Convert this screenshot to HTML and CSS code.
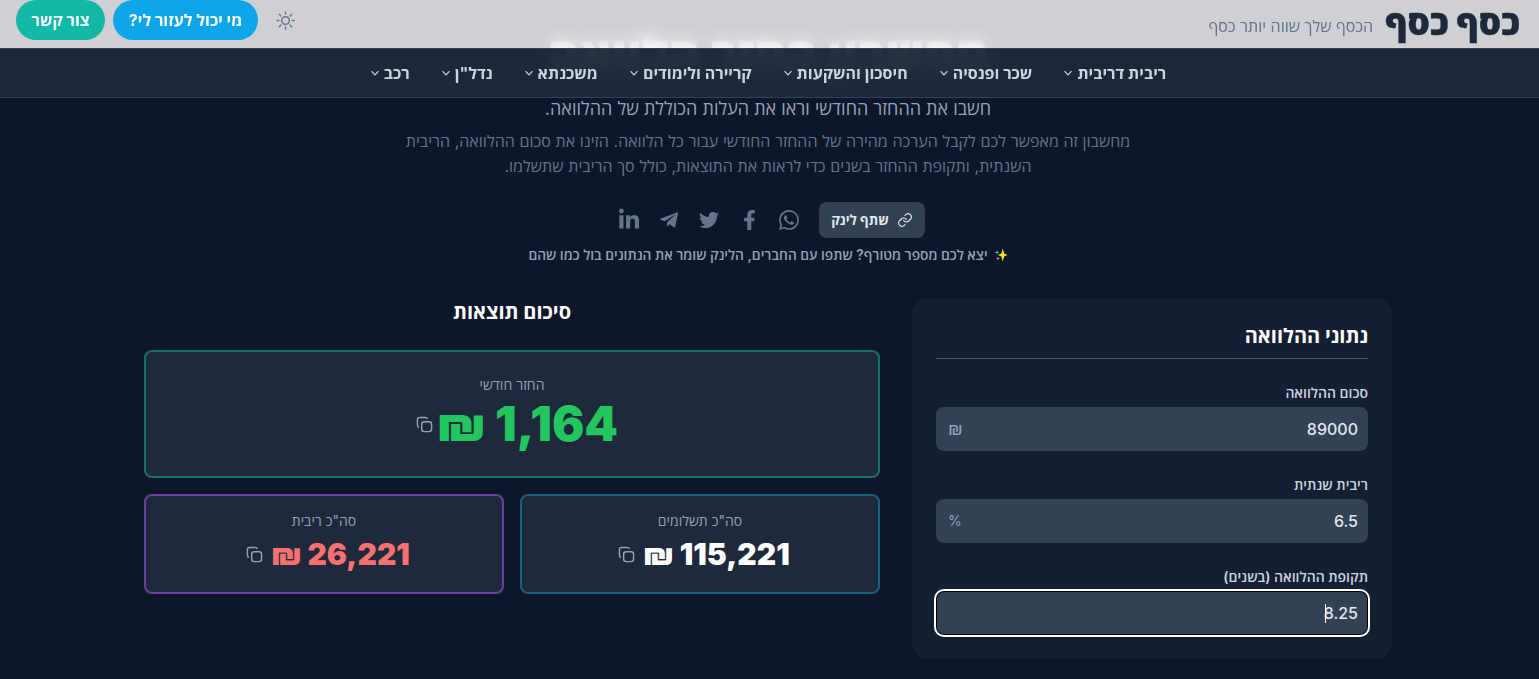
FILE: index.html
```html
<!DOCTYPE html>
<html lang="he" dir="rtl">
<head>
    <meta charset="UTF-8">
    <meta name="viewport" content="width=device-width, initial-scale=1.0">
    <title>כסף כסף - מחשבון החזר הלוואה</title>
    <link rel="stylesheet" href="styles.css">
</head>
<body>
    <header class="site-header">
        <div class="top-bar">
            <div class="brand">
                <span class="logo">כסף כסף</span>
                <span class="tagline">הכסף שלך שווה יותר כסף</span>
            </div>
            <div class="top-actions">
                <button class="theme-btn" aria-label="מצב תצוגה">
                    <svg viewBox="0 0 24 24" width="23" height="23" fill="none" stroke="currentColor" stroke-width="1.5" stroke-linecap="round">
                        <circle cx="12" cy="12" r="4"/>
                        <path d="M12 3v2.2M12 18.8V21M3 12h2.2M18.8 12H21M5.6 5.6l1.6 1.6M16.8 16.8l1.6 1.6M5.6 18.4l1.6-1.6M16.8 7.2l1.6-1.6"/>
                    </svg>
                </button>
                <a class="pill pill-blue" href="#">מי יכול לעזור לי?</a>
                <a class="pill pill-teal" href="#">צור קשר</a>
            </div>
        </div>
        <nav class="main-nav">
            <a href="#"><span>ריבית דריבית</span><svg class="chev" viewBox="0 0 10 10"><path d="M1.5 3.2 5 6.8l3.5-3.6"/></svg></a>
            <a href="#"><span>שכר ופנסיה</span><svg class="chev" viewBox="0 0 10 10"><path d="M1.5 3.2 5 6.8l3.5-3.6"/></svg></a>
            <a href="#"><span>חיסכון והשקעות</span><svg class="chev" viewBox="0 0 10 10"><path d="M1.5 3.2 5 6.8l3.5-3.6"/></svg></a>
            <a href="#"><span>קריירה ולימודים</span><svg class="chev" viewBox="0 0 10 10"><path d="M1.5 3.2 5 6.8l3.5-3.6"/></svg></a>
            <a href="#"><span>משכנתא</span><svg class="chev" viewBox="0 0 10 10"><path d="M1.5 3.2 5 6.8l3.5-3.6"/></svg></a>
            <a href="#"><span>נדל"ן</span><svg class="chev" viewBox="0 0 10 10"><path d="M1.5 3.2 5 6.8l3.5-3.6"/></svg></a>
            <a href="#"><span>רכב</span><svg class="chev" viewBox="0 0 10 10"><path d="M1.5 3.2 5 6.8l3.5-3.6"/></svg></a>
        </nav>
    </header>

    <main class="container">
        <section class="intro">
            <h1>מחשבון החזר הלוואה</h1>
            <p class="subtitle">חשבו את ההחזר החודשי וראו את העלות הכוללת של ההלוואה.</p>
            <p class="description">מחשבון זה מאפשר לכם לקבל הערכה מהירה של ההחזר החודשי עבור כל הלוואה. הזינו את סכום ההלוואה, הריבית השנתית, ותקופת ההחזר בשנים כדי לראות את התוצאות, כולל סך הריבית שתשלמו.</p>

            <div class="share-row">
                <button class="share-btn">
                    <svg viewBox="0 0 24 24" width="16" height="16" fill="none" stroke="currentColor" stroke-width="1.7" stroke-linecap="round" stroke-linejoin="round">
                        <path d="M10 13a5 5 0 0 0 7.5.5l3-3a5 5 0 0 0-7-7l-1.7 1.7"/>
                        <path d="M14 11a5 5 0 0 0-7.5-.5l-3 3a5 5 0 0 0 7 7l1.7-1.7"/>
                    </svg>
                    שתף לינק
                </button>
                <a class="social" href="#" aria-label="WhatsApp"><svg viewBox="0 0 448 512" width="20" height="24"><path d="M380.9 97.1C339 55.1 283.2 32 223.9 32c-122.4 0-222 99.6-222 222 0 39.1 10.2 77.3 29.6 111L0 480l117.7-30.9c32.4 17.7 68.9 27 106.1 27h.1c122.3 0 224.1-99.6 224.1-222 0-59.3-25.2-115-67.1-157zm-157 341.6c-33.2 0-65.7-8.9-94-25.7l-6.7-4-69.8 18.3L72 359.2l-4.4-7c-18.5-29.4-28.2-63.3-28.2-98.2 0-101.7 82.8-184.5 184.6-184.5 49.3 0 95.6 19.2 130.4 54.1 34.8 34.9 56.2 81.2 56.1 130.5 0 101.8-84.9 184.6-186.6 184.6zm101.2-138.2c-5.5-2.8-32.8-16.2-37.9-18-5.1-1.9-8.8-2.8-12.5 2.8-3.7 5.6-14.3 18-17.6 21.8-3.2 3.7-6.5 4.2-12 1.4-32.6-16.3-54-29.1-75.5-66-5.7-9.8 5.7-9.1 16.3-30.3 1.8-3.7.9-6.9-.5-9.7-1.4-2.8-12.5-30.1-17.1-41.2-4.5-10.8-9.1-9.3-12.5-9.5-3.2-.2-6.9-.2-10.6-.2-3.7 0-9.7 1.4-14.8 6.9-5.1 5.6-19.4 19-19.4 46.3 0 27.3 19.9 53.7 22.6 57.4 2.8 3.7 39.1 59.7 94.8 83.8 35.2 15.2 49 16.5 66.6 13.9 10.7-1.6 32.8-13.4 37.4-26.4 4.6-13 4.6-24.1 3.2-26.4-1.3-2.5-5-3.9-10.5-6.6z"/></svg></a>
                <a class="social" href="#" aria-label="Facebook"><svg viewBox="0 0 320 512" width="13" height="20"><path d="M279.14 288l14.22-92.66h-88.91v-60.13c0-25.35 12.42-50.06 52.24-50.06h40.42V6.26S260.43 0 225.36 0c-73.22 0-121.08 44.38-121.08 124.72v70.62H22.89V288h81.39v224h100.17V288z"/></svg></a>
                <a class="social" href="#" aria-label="Twitter"><svg viewBox="0 0 512 512" width="20" height="24"><path d="M459.37 151.716c.325 4.548.325 9.097.325 13.645 0 138.72-105.583 298.558-298.558 298.558-59.452 0-114.68-17.219-161.137-47.106 8.447.974 16.568 1.299 25.34 1.299 49.055 0 94.213-16.568 130.274-44.832-46.132-.975-84.792-31.188-98.112-72.772 6.498.974 12.995 1.624 19.818 1.624 9.421 0 18.843-1.3 27.614-3.573-48.081-9.747-84.143-51.98-84.143-102.985v-1.299c13.969 7.797 30.214 12.67 47.431 13.319-28.264-18.843-46.781-51.005-46.781-87.391 0-19.492 5.197-37.36 14.294-52.954 51.655 63.675 129.3 105.258 216.365 109.807-1.624-7.797-2.599-15.918-2.599-24.04 0-57.828 46.782-104.934 104.934-104.934 30.213 0 57.502 12.67 76.67 33.137 23.715-4.548 46.456-13.32 66.599-25.34-7.798 24.366-24.366 44.833-46.132 57.827 21.117-2.273 41.584-8.122 60.426-16.243-14.292 20.791-32.161 39.308-52.628 54.253z"/></svg></a>
                <a class="social" href="#" aria-label="Telegram"><svg viewBox="0 0 448 512" width="18" height="24"><path d="M446.7 98.6l-67.6 318.8c-5.1 22.5-18.4 28.1-37.3 17.5l-103-75.9-49.7 47.8c-5.5 5.5-10.1 10.1-20.7 10.1l7.4-104.9 190.9-172.5c8.3-7.4-1.8-11.5-12.9-4.1L117.8 284 16.2 252.2c-22.1-6.9-22.5-22.1 4.6-32.7L418.2 66.4c18.4-6.9 34.5 4.1 28.5 32.2z"/></svg></a>
                <a class="social" href="#" aria-label="LinkedIn"><svg viewBox="0 0 448 512" width="20" height="24"><path d="M100.28 448H7.4V148.9h92.88zM53.79 108.1C24.09 108.1 0 83.5 0 53.8a53.79 53.79 0 0 1 107.58 0c0 29.7-24.1 54.3-53.79 54.3zM447.9 448h-92.68V302.4c0-34.7-.7-79.2-48.29-79.2-48.29 0-55.69 37.7-55.69 76.7V448h-92.78V148.9h89.08v40.8h1.3c12.4-23.5 42.69-48.3 87.88-48.3 94 0 111.28 61.9 111.28 142.3V448z"/></svg></a>
            </div>
            <p class="share-hint">
                <svg class="sparkle" viewBox="0 0 16 16" width="14" height="14">
                    <path fill="#ffe01a" d="M10 0.5 11.6 6.4 15.5 8 11.6 9.6 10 15.5 8.4 9.6 4.5 8 8.400 6.400z"/>
                    <path fill="#3db8f5" d="M3.500 2.500l.7 1.800 1.800.7-1.800.7-.7 1.800-.7-1.800L1 5l1.800-.7z"/>
                    <path fill="#f08cb8" d="M4.500 10l.7 1.300 1.300.7-1.300.7-.7 1.300-.7-1.300-1.300-.7 1.300-.7z"/>
                </svg>
                יצא לכם מספר מטורף? שתפו עם החברים, הלינק שומר את הנתונים בול כמו שהם
            </p>
        </section>

        <div class="calc-grid">
            <form class="form-card">
                <h2 class="form-title">נתוני ההלוואה</h2>

                <div class="field">
                    <label for="amount">סכום ההלוואה</label>
                    <div class="input-wrap">
                        <input id="amount" type="text" value="89000">
                        <span class="unit unit-shekel">₪</span>
                    </div>
                </div>
                <div class="field">
                    <label for="rate">ריבית שנתית</label>
                    <div class="input-wrap">
                        <input id="rate" type="text" value="6.5">
                        <span class="unit">%</span>
                    </div>
                </div>
                <div class="field">
                    <label for="years">תקופת ההלוואה (בשנים)</label>
                    <div class="input-wrap">
                        <input id="years" class="is-focused" type="text" value="8.25">
                        <span class="caret"></span>
                    </div>
                </div>
            </form>

            <section class="results">
                <h2 class="results-title">סיכום תוצאות</h2>
                <div class="result-card result-main">
                    <span class="result-label">החזר חודשי</span>
                    <div class="result-value value-green" dir="ltr">
                        <svg class="copy-icon" viewBox="0 0 24 24" fill="none" stroke="currentColor" stroke-width="2" stroke-linejoin="round"><rect x="8" y="8" width="14" height="14" rx="3.500"/><path d="M4.500 16A3 3 0 0 1 2 13V5a3 3 0 0 1 3-3h8a3 3 0 0 1 3 2.500"/></svg>
                        <span>₪ 1,164</span>
                    </div>
                </div>
                <div class="result-pair">
                    <div class="result-card result-blue">
                        <span class="result-label">סה"כ תשלומים</span>
                        <div class="result-value value-white" dir="ltr">
                            <svg class="copy-icon" viewBox="0 0 24 24" fill="none" stroke="currentColor" stroke-width="2" stroke-linejoin="round"><rect x="8" y="8" width="14" height="14" rx="3.500"/><path d="M4.500 16A3 3 0 0 1 2 13V5a3 3 0 0 1 3-3h8a3 3 0 0 1 3 2.500"/></svg>
                            <span>₪ 115,221</span>
                        </div>
                    </div>
                    <div class="result-card result-purple">
                        <span class="result-label">סה"כ ריבית</span>
                        <div class="result-value value-red" dir="ltr">
                            <svg class="copy-icon" viewBox="0 0 24 24" fill="none" stroke="currentColor" stroke-width="2" stroke-linejoin="round"><rect x="8" y="8" width="14" height="14" rx="3.500"/><path d="M4.500 16A3 3 0 0 1 2 13V5a3 3 0 0 1 3-3h8a3 3 0 0 1 3 2.500"/></svg>
                            <span>₪ 26,221</span>
                        </div>
                    </div>
                </div>
            </section>
        </div>
    </main>
</body>
</html>
```

FILE: styles.css
```css
:root {
    --bg-color: #0e162a;
    --card-bg: #151f32;
    --panel-bg: #1e293b;
    --input-bg: #334155;
    --muted: #94a3b8;
    --dim: #64748b;
}

* {
    margin: 0;
    padding: 0;
    box-sizing: border-box;
}

html, body {
    height: 100%;
    overflow: hidden;
}

body {
    background-color: var(--bg-color);
    color: #e2e8f0;
    font-family: Inter, "Open Sans", "Liberation Sans", sans-serif;
    padding-right: 3px;
}

/* header sits over the scrolled page */
.site-header {
    position: absolute;
    top: 0;
    left: 0;
    right: 0;
    z-index: 5;
}

.top-bar {
    height: 49px;
    display: flex;
    justify-content: space-between;
    align-items: flex-start;
    padding: 0 19px 0 16px;
    background: rgba(255, 255, 255, 0.8);
    backdrop-filter: blur(8px);
    border-bottom: 1px solid #334155;
}

.brand {
    display: flex;
    align-items: flex-end;
    gap: 12px;
    height: 44px;
}

.logo {
    font-size: 35px;
    line-height: 44px;
    font-weight: 800;
    color: #1e293b;
    -webkit-text-stroke: 0.4px #1e293b;
}

.tagline {
    font-size: 16px;
    line-height: 20px;
    color: #64748b;
    padding-bottom: 8px;
}

.top-actions {
    display: flex;
    align-items: center;
    gap: 8px;
}

.theme-btn {
    width: 40px;
    height: 40px;
    display: flex;
    align-items: center;
    justify-content: center;
    background: none;
    border: none;
    color: #64748b;
}

.pill {
    height: 40px;
    display: flex;
    align-items: center;
    padding: 0 15.5px;
    border-radius: 20px;
    color: #fff;
    font-size: 16px;
    font-weight: 700;
    text-decoration: none;
}

.pill-blue {
    background-color: #0ea5e9;
}

.pill-teal {
    background-color: #14b8a6;
}

.main-nav {
    height: 49px;
    display: flex;
    justify-content: center;
    align-items: center;
    gap: 31px;
    padding-right: 3px;
    background: rgba(30, 41, 59, 0.95);
    backdrop-filter: blur(8px);
    border-bottom: 1px solid #334155;
}

.main-nav a {
    display: flex;
    align-items: center;
    gap: 4px;
    color: #cbd5e1;
    font-size: 16px;
    font-weight: 700;
    text-decoration: none;
}

.chev {
    width: 10px;
    height: 10px;
    fill: none;
    stroke: currentColor;
    stroke-width: 1.2;
}

.container {
    max-width: 1248px;
    margin: 0 auto;
    padding-top: 31px;
}

.intro {
    text-align: center;
}

h1 {
    font-size: 48px;
    line-height: 48px;
    font-weight: 800;
    color: #fff;
    margin-bottom: 16px;
}

.subtitle {
    font-size: 18px;
    line-height: 28px;
    color: #94a3b8;
    margin-bottom: 6px;
}

.description {
    max-width: 768px;
    margin: 0 auto 23px;
    font-size: 16px;
    line-height: 25px;
    word-spacing: 0.2px;
    color: var(--dim);
}

.share-row {
    display: flex;
    justify-content: center;
    align-items: center;
    gap: 20px;
    padding-left: 8px;
    margin-bottom: 9px;
}

.share-btn {
    height: 36px;
    display: flex;
    align-items: center;
    gap: 8px;
    padding: 0 12px;
    border: none;
    border-radius: 8px;
    background-color: var(--input-bg);
    color: #e2e8f0;
    font-family: inherit;
    font-size: 13.5px;
    font-weight: 700;
}

.social {
    width: 20px;
    display: flex;
    justify-content: center;
    color: #64748b;
}

.social svg {
    fill: currentColor;
}

.share-hint {
    display: flex;
    justify-content: center;
    align-items: center;
    gap: 6px;
    font-size: 13.8px;
    line-height: 16px;
    font-weight: 600;
    color: var(--muted);
    margin-bottom: 35px;
}

.calc-grid {
    display: grid;
    grid-template-columns: 480px 736px;
    gap: 32px;
    align-items: start;
}

.form-card {
    background-color: var(--card-bg);
    border-radius: 16px;
    padding: 24px;
    height: 361px;
}

.form-title {
    font-size: 20px;
    line-height: 28px;
    font-weight: 700;
    color: #fff;
    padding-bottom: 8px;
    margin-bottom: 24px;
    border-bottom: 1px solid #475569;
}

.field {
    margin-bottom: 24px;
}

.field:last-child {
    margin-bottom: 0;
}

.field label {
    display: block;
    font-size: 14px;
    line-height: 20px;
    font-weight: 600;
    color: #cbd5e1;
    margin-bottom: 4px;
}

.input-wrap {
    position: relative;
}

.input-wrap input {
    display: block;
    width: 100%;
    height: 44px;
    padding: 0 10px;
    border: none;
    border-radius: 8px;
    background-color: var(--input-bg);
    color: #e2e8f0;
    font-family: inherit;
    font-size: 16px;
    font-weight: 500;
    text-align: right;
    direction: ltr;
    outline: none;
}

.input-wrap input.is-focused {
    outline: 2px solid #fff;
    outline-offset: 0;
    box-shadow: 0 0 0 1px #000 inset;
}

.unit {
    position: absolute;
    left: 12px;
    top: 0;
    line-height: 44px;
    font-size: 14px;
    color: var(--muted);
}

.unit-shekel {
    font-size: 18px;
}

.caret {
    position: absolute;
    top: 13px;
    right: 42px;
    width: 1px;
    height: 19px;
    background-color: #fff;
}

.results {
    display: flex;
    flex-direction: column;
}

.results-title {
    font-size: 20px;
    line-height: 28px;
    font-weight: 700;
    color: #fff;
    text-align: center;
    margin-bottom: 24px;
}

.result-card {
    display: flex;
    flex-direction: column;
    align-items: center;
    background-color: var(--panel-bg);
    border: 2px solid;
    border-radius: 8px;
}

.result-main {
    height: 128px;
    padding-top: 23px;
    border-color: #14706f;
    margin-bottom: 16px;
}

.result-pair {
    display: grid;
    grid-template-columns: 1fr 1fr;
    gap: 16px;
}

.result-pair .result-card {
    height: 100px;
    padding-top: 15px;
}

.result-blue {
    border-color: #14637f;
}

.result-purple {
    border-color: #6b3fa0;
}

.result-label {
    font-size: 14px;
    line-height: 20px;
    color: var(--muted);
}

.result-value {
    display: flex;
    align-items: center;
    gap: 8px;
    padding-left: 8px;
    font-size: 30px;
    line-height: 40px;
    font-weight: 900;
    margin-top: 3px;
}

.result-main .result-value {
    gap: 4px;
    padding-left: 10px;
    font-size: 48px;
    line-height: 48px;
    margin-top: 5px;
}

.value-green {
    color: #22c55e;
}

.value-white {
    color: #fff;
}

.value-red {
    color: #f87171;
}

.copy-icon {
    width: 17px;
    height: 17px;
    color: var(--muted);
}
```
